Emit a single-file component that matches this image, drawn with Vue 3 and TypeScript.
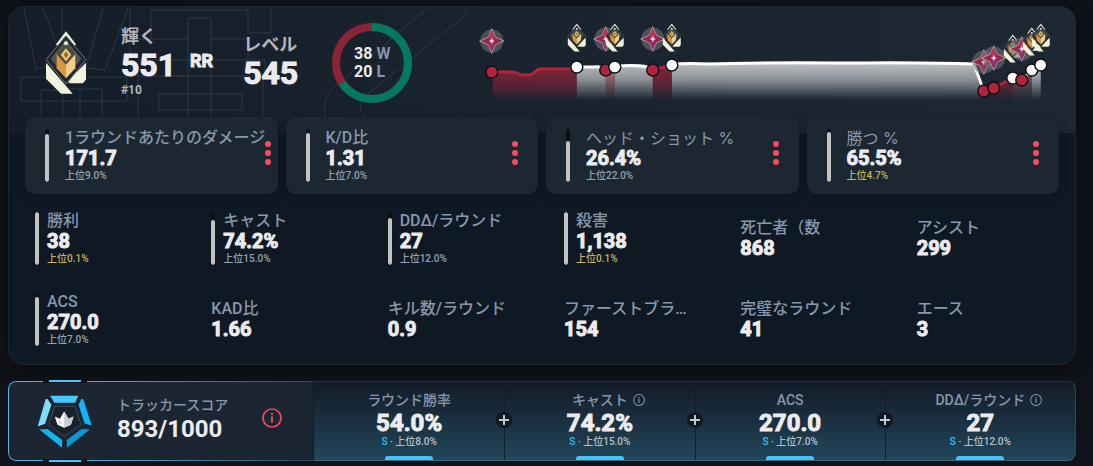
<script setup lang="ts">
interface Stat {
  label: string
  value: string
  top?: number
  topText?: string
  gold?: boolean
  wide?: boolean
}

interface Point {
  x: number
  y: number
  tier: 'radiant' | 'immortal'
  iconY: number
}

const cards: Stat[] = [
  { label: '1ラウンドあたりのダメージ', value: '171.7', top: 9, topText: '上位9.0%' },
  { label: 'K/D比', value: '1.31', top: 7, topText: '上位7.0%' },
  { label: 'ヘッド・ショット %', value: '26.4%', top: 22, topText: '上位22.0%', wide: true },
  { label: '勝つ %', value: '65.5%', top: 4.7, topText: '上位4.7%', gold: true, wide: true },
]

const stats: Stat[] = [
  { label: '勝利', value: '38', top: 0.1, topText: '上位0.1%', gold: true },
  { label: 'キャスト', value: '74.2%', top: 15, topText: '上位15.0%' },
  { label: 'DDΔ/ラウンド', value: '27', top: 12, topText: '上位12.0%' },
  { label: '殺害', value: '1,138', top: 0.1, topText: '上位0.1%', gold: true },
  { label: '死亡者（数', value: '868' },
  { label: 'アシスト', value: '299' },
  { label: 'ACS', value: '270.0', top: 7, topText: '上位7.0%' },
  { label: 'KAD比', value: '1.66' },
  { label: 'キル数/ラウンド', value: '0.9' },
  { label: 'ファーストブラ…', value: '154' },
  { label: '完璧なラウンド', value: '41' },
  { label: 'エース', value: '3' },
]

const scoreParts = [
  { label: 'ラウンド勝率', value: '54.0%', topText: '上位8.0%', info: false },
  { label: 'キャスト', value: '74.2%', topText: '上位15.0%', info: true },
  { label: 'ACS', value: '270.0', topText: '上位7.0%', info: false },
  { label: 'DDΔ/ラウンド', value: '27', topText: '上位12.0%', info: true },
]

const points: Point[] = [
  { x: 492, y: 72, tier: 'immortal', iconY: 41 },
  { x: 577, y: 67, tier: 'radiant', iconY: 37 },
  { x: 606, y: 70, tier: 'immortal', iconY: 39 },
  { x: 615, y: 67, tier: 'radiant', iconY: 37 },
  { x: 653, y: 70, tier: 'immortal', iconY: 39 },
  { x: 672, y: 65, tier: 'radiant', iconY: 37 },
  { x: 984, y: 91, tier: 'immortal', iconY: 62 },
  { x: 994, y: 88, tier: 'immortal', iconY: 58 },
  { x: 1013, y: 78, tier: 'radiant', iconY: 48 },
  { x: 1022, y: 80, tier: 'immortal', iconY: 49 },
  { x: 1032, y: 70, tier: 'radiant', iconY: 41 },
  { x: 1041, y: 65, tier: 'radiant', iconY: 37 },
]

const wins = 38
const losses = 20
const circumference = 2 * Math.PI * 36
const winArc = (circumference * wins) / (wins + losses)
</script>

<template>
  <main class="page">
    <svg class="defs" aria-hidden="true">
      <symbol id="radiant" viewBox="130 92 132 194">
        <path d="M196 95 226 134 221 140 196 109 171 140 166 134Z" fill="#e9efe2" />
        <path d="M136 190 216 283H181L136 238Z" fill="#f1f3df" />
        <path d="M256 190V240L247 251H207L200 245Z" fill="#f1f3df" />
        <path d="M196 109 256 180 196 254 136 180Z" fill="#20262b" stroke="#6d7575" stroke-width="3" />
        <path d="M196 120 242 178 196 236 150 178Z" fill="#50564f" />
        <path d="M168 162 196 192V236L168 206Z" fill="#d9963c" />
        <path d="M224 162 196 192V236L224 206Z" fill="#f2cf88" />
        <path d="M196 134 224 164 196 196 168 164Z" fill="#4b4a42" />
        <path d="M196 146 212 166 196 186 180 166Z" fill="#efc66c" />
        <path d="M196 156 203 166 196 176 189 166Z" fill="#8a6d3a" />
        <circle cx="196" cy="131" r="6" fill="#f4f6ee" />
      </symbol>
      <symbol id="immortal" viewBox="0 0 26 26">
        <circle cx="13" cy="13" r="11.5" fill="#6b7173" fill-opacity=".6" />
        <path d="M13 0 17 9 26 13 17 17 13 26 9 17 0 13 9 9Z" fill="#b9a9ad" />
        <path d="M13 2 16.500 9.500 24 13 16.500 16.500 13 24 9.500 16.500 2 13 9.500 9.500Z" fill="#98264a" />
        <path d="M13 2 16.500 9.500 13 13 9.500 9.500Z" fill="#b4365a" />
        <path d="M13 24 16.500 16.500 13 13 9.500 16.500Z" fill="#923468" />
        <path d="M13 10 14 12 16 13 14 14 13 16 12 14 10 13 12 12Z" fill="#efd9f0" />
      </symbol>
      <symbol id="info" viewBox="0 0 20 20">
        <circle cx="10" cy="10" r="9" fill="none" stroke="currentColor" stroke-width="1.700" />
        <path d="M10 8.500V15M10 5V7" fill="none" stroke="currentColor" stroke-width="1.800" />
      </symbol>
    </svg>

    <section class="panel">
      <header class="hero">
        <svg class="map" viewBox="8 6 520 127" aria-hidden="true">
          <path
            d="M23 7 35 68 55 65M42 7 58 50M61 7V42M102 7 85 67 104 69 127 7M129 7V70M20 76H126V100H20ZM40 133V89H62V133M79 88V133M62 88H101V133M137 133V70M126 75H187M137 38H187M150 38V9H247V32H270V7M187 133V17H210V133M210 38H247V59M137 59H264V75H160M158 93H241V109H158ZM262 75V133M427 7 332 87C321 97 322 110 328 133M461 7 467 12 362 97Q355 106 365 117"
          />
        </svg>
        <svg class="rank-icon" role="img" aria-label="輝く"><use href="#radiant" /></svg>
        <div class="rank">
          <div class="title">輝く</div>
          <div class="rating"><span class="big">551</span><span class="unit">RR</span></div>
          <div class="place">#10</div>
        </div>
        <div class="level">
          <div class="title">レベル</div>
          <div class="big">545</div>
        </div>
        <div class="ring">
          <svg viewBox="0 0 80 80" aria-hidden="true">
            <circle cx="40" cy="40" r="36" stroke="#8c2438" />
            <circle
              cx="40"
              cy="40"
              r="36"
              stroke="#037a5e"
              :stroke-dasharray="`${winArc} ${circumference}`"
              transform="rotate(-90 40 40)"
            />
          </svg>
          <div class="record">
            <span>{{ wins }} <i>W</i></span>
            <span>{{ losses }} <i>L</i></span>
          </div>
        </div>
        <svg class="chart" viewBox="480 7 595 110" preserveAspectRatio="xMaxYMid meet" role="img" aria-label="RR">
          <defs>
            <linearGradient id="white-fill" gradientUnits="userSpaceOnUse" x1="0" y1="62" x2="0" y2="100">
              <stop offset="0" stop-color="#fff" stop-opacity=".72" />
              <stop offset=".45" stop-color="#fff" stop-opacity=".5" />
              <stop offset="1" stop-color="#fff" stop-opacity="0" />
            </linearGradient>
            <linearGradient id="red-fill" gradientUnits="userSpaceOnUse" x1="0" y1="68" x2="0" y2="100">
              <stop offset="0" stop-color="#a02238" stop-opacity=".75" />
              <stop offset=".5" stop-color="#8a2237" stop-opacity=".6" />
              <stop offset="1" stop-color="#8a2237" stop-opacity="0" />
            </linearGradient>
            <linearGradient id="pink-fill" gradientUnits="userSpaceOnUse" x1="0" y1="68" x2="0" y2="100">
              <stop offset="0" stop-color="#e08a92" stop-opacity=".85" />
              <stop offset="1" stop-color="#e08a92" stop-opacity="0" />
            </linearGradient>
          </defs>
          <path d="M493 72H512L522 75H530L540 70 577 69V100H493Z" fill="url(#red-fill)" />
          <path d="M577 67 597 66 606 70V100H577ZM615 67 645 66 653 70V100H615ZM672 65 682 63 860 62 973 64 982 91V100H672Z" fill="url(#white-fill)" />
          <path d="M606 70 615 67V100H606Z" fill="url(#pink-fill)" />
          <path d="M653 70 672 65V100H653ZM994 88 1013 78V100H994Z" fill="url(#red-fill)" />
          <path d="M1013 78 1032 72V100H1013Z" fill="url(#pink-fill)" opacity=".6" />
          <path d="M1032 70 1041 65V100H1032Z" fill="url(#white-fill)" />
          <g class="line red">
            <path d="M492 72H512C518 72 518 75 524 75H529C535 75 535 69 541 69H577M606 70 615 67M653 70 672 65M984 91 994 88 1013 78 1022 80" />
          </g>
          <g class="line">
            <path d="M577 67H593Q602 66 606 70M615 66C634 65 648 65 653 70M672 64Q690 63 710 64C760 62 830 63 860 63 900 62 930 63 974 64L984 91M1022 80 1032 70 1041 65" />
          </g>
          <template v-for="p in points" :key="p.x">
            <use v-if="p.tier === 'radiant'" href="#radiant" :x="p.x - 10" :y="p.iconY - 14" width="20" height="29" />
            <use v-else href="#immortal" :x="p.x - 13" :y="p.iconY - 13" width="26" height="26" />
          </template>
          <circle
            v-for="p in points"
            :key="p.x"
            :cx="p.x"
            :cy="p.y"
            r="6"
            :fill="p.tier === 'radiant' ? '#fff' : '#b3243c'"
            stroke="#0d1016"
            stroke-width="1.500"
          />
        </svg>
      </header>

      <div class="cards">
        <article v-for="c in cards" :key="c.label" class="card">
          <div class="meter"><div :style="{ height: 100 - (c.top ?? 0) + '%' }"></div></div>
          <div class="text">
            <div class="label" :class="{ wide: c.wide }">{{ c.label }}</div>
            <div class="value">{{ c.value }}</div>
            <div class="top" :class="{ gold: c.gold }">{{ c.topText }}</div>
          </div>
          <button class="more" type="button" :aria-label="c.label">
            <i></i><i></i><i></i>
          </button>
        </article>
      </div>

      <div class="stats">
        <div v-for="s in stats" :key="s.label" class="stat">
          <div v-if="s.topText" class="meter"><div :style="{ height: 100 - (s.top ?? 0) + '%' }"></div></div>
          <div class="text">
            <div class="label">{{ s.label }}</div>
            <div class="value">{{ s.value }}</div>
            <div v-if="s.topText" class="top" :class="{ gold: s.gold }">{{ s.topText }}</div>
          </div>
        </div>
      </div>
    </section>

    <section class="score">
      <div class="total">
        <svg class="badge" viewBox="110 374 170 164" aria-hidden="true">
          <path d="M152 379H236L227 400H165Z" fill="#45c8ff" />
          <path d="M139 389H144L156 405 137 463 115 471Z" fill="#7ddcff" />
          <path d="M245 389H251L276 468 255 462 237 406Z" fill="#0fb4fb" />
          <path d="M120 480 144 478 188 511V534Z" fill="#0fb4fb" />
          <path d="M271 480 202 534V511L246 478Z" fill="#0898d8" />
          <path d="M165 411H226L244 465 194 500 148 465Z" fill="#18212c" stroke="#4e5863" stroke-width="2" />
          <path d="M166 441 181 448 194 426 207 448 222 441 214 466 194 475 174 466Z" fill="#fff" />
          <path d="M194 426 207 448 222 441 214 466 194 475Z" fill="#c9cdd2" />
          <path d="M181 448 188 462 174 466Z" fill="#dadde0" />
        </svg>
        <div class="total-text">
          <div class="small-label">トラッカースコア</div>
          <div class="score-value">893/1000</div>
        </div>
        <button class="info-button" type="button" aria-label="トラッカースコア">
          <svg><use href="#info" /></svg>
        </button>
      </div>
      <div class="parts">
        <div v-for="p in scoreParts" :key="p.label" class="part">
          <div class="small-label">
            {{ p.label }}<svg v-if="p.info" class="info" aria-hidden="true"><use href="#info" /></svg>
          </div>
          <div class="score-value">{{ p.value }}</div>
          <div class="grade"><b>S</b> · {{ p.topText }}</div>
          <span class="plus" aria-hidden="true"></span>
        </div>
      </div>
    </section>
  </main>
</template>

<style>
body {
  margin: 0;
  background: #0f1218;
}
</style>

<style scoped>
.page {
  box-sizing: border-box;
  padding: 6px 17px 6px 8px;
  font-family: Roboto, "Noto Sans CJK JP", sans-serif;
  color: #ececf0;
  background: #0f1218;
}
.page * {
  box-sizing: border-box;
}
.defs {
  position: absolute;
  width: 0;
  height: 0;
}
.panel {
  padding-bottom: 18px;
  border: 1px solid #1d2832;
  border-radius: 16px;
  background: #0f1923;
  box-shadow: 0 4px 16px #0b0d10;
  overflow: hidden;
}
.hero {
  position: relative;
  display: flex;
  align-items: center;
  height: 126px;
  padding: 0 0 16px 35px;
  background: linear-gradient(90deg, #151e28, #1a242f 50%, #1d2833);
}
.map {
  position: absolute;
  left: 0;
  top: 0;
  width: 520px;
  height: 127px;
}
.map path {
  fill: none;
  stroke: #2e3842;
  stroke-width: 1;
}
.rank-icon {
  position: relative;
  width: 44px;
  height: 65px;
}
.rank {
  position: relative;
  margin-left: 33px;
}
.title {
  font-size: 18px;
  line-height: 22px;
  font-weight: 700;
  color: #b2b4b9;
}
.rating {
  display: flex;
  gap: 14px;
}
.big {
  font-size: 32px;
  line-height: 34px;
  font-weight: 700;
}
.unit {
  font-size: 18px;
  line-height: 26px;
  font-weight: 700;
}
.big,
.unit,
.value,
.part .score-value {
  -webkit-text-stroke: 1px currentColor;
}
.place {
  font-size: 12px;
  line-height: 16px;
  font-weight: 700;
  color: #b2b4b9;
}
.level {
  position: relative;
  margin-left: 30px;
}
.ring {
  position: relative;
  display: grid;
  place-items: center;
  width: 80px;
  height: 80px;
  margin: 2px 0 0 34px;
}
.ring > * {
  grid-area: 1 / 1;
}
.ring circle {
  fill: none;
  stroke-width: 8;
}
.record {
  display: grid;
  font-size: 16px;
  line-height: 18px;
  font-weight: 700;
}
.record i {
  font-style: normal;
  color: #8393a8;
}
.chart {
  position: relative;
  flex: 1;
  min-width: 0;
  height: 110px;
}
.line path {
  fill: none;
  stroke: #fff;
  stroke-width: 3;
}
.line.red path {
  stroke: #b3243c;
}
.cards {
  position: relative;
  display: grid;
  grid-template-columns: repeat(4, minmax(0, 1fr));
  gap: 8px;
  margin: -16px 16px 0;
}
.card {
  display: flex;
  padding: 12px 20px;
  border-radius: 10px;
  background: #1c2732;
  box-shadow: 0 2px 8px #0c131b80;
}
.meter {
  display: flex;
  flex: none;
  flex-direction: column;
  justify-content: flex-end;
  width: 4px;
  border-radius: 2px;
  background: #0c0f14;
  overflow: hidden;
}
.meter div {
  border-radius: 2px;
  background: #c6c2bf;
}
.text {
  white-space: nowrap;
}
.card .text {
  flex: 1;
  margin-left: 16px;
}
.label {
  font-size: 16px;
  line-height: 18px;
  font-weight: 500;
  color: #8797ac;
}
.label.wide {
  font-family: Inter, "Noto Sans CJK JP", sans-serif;
  font-weight: 400;
}
.value {
  font-size: 20px;
  line-height: 22px;
  font-weight: 700;
}
.top {
  font-size: 10px;
  line-height: 13px;
  font-weight: 500;
  color: #94a3b5;
}
.top.gold {
  color: #c5b25a;
}
.more {
  display: flex;
  flex-direction: column;
  justify-content: center;
  gap: 3px;
  height: 48px;
  padding: 0;
  border: 0;
  background: none;
  cursor: pointer;
}
.more i {
  width: 6px;
  height: 6px;
  border-radius: 50%;
  background: #fb4a5b;
}
.stats {
  display: grid;
  grid-template-columns: repeat(6, minmax(0, 1fr));
  grid-auto-rows: 53px;
  gap: 28px 24px;
  margin: 18px 16px 0;
}
.stat {
  display: flex;
  align-items: center;
  gap: 8px;
  padding: 0 10px;
}
.stat .meter {
  align-self: stretch;
}
.score {
  display: flex;
  height: 80px;
  margin-top: 16px;
}
.total {
  position: relative;
  display: flex;
  align-items: center;
  flex: 0 0 305px;
  padding-left: 28px;
  border-radius: 8px 0 0 8px;
  background: #1c2632;
}
.total::before {
  content: "";
  position: absolute;
  inset: 0;
  border: solid #55b8e6;
  border-width: 1px 0 1px 1px;
  border-radius: 8px 0 0 8px;
  mask-image: linear-gradient(90deg, #000, #000c 40%, #0004);
}
.total::after {
  content: "";
  position: absolute;
  left: 35px;
  top: -1px;
  bottom: -1px;
  width: 44px;
  background:
    linear-gradient(#4cc6fb, #4cc6fb) center top / 32px 2px no-repeat,
    linear-gradient(#4cc6fb, #4cc6fb) center bottom / 32px 2px no-repeat,
    linear-gradient(#0f1218, #0f1218) center top / 44px 3px no-repeat,
    linear-gradient(#0f1218, #0f1218) center bottom / 44px 3px no-repeat;
}
.badge {
  width: 57px;
  height: 55px;
}
.total-text {
  margin-left: 24px;
  padding-bottom: 4px;
}
.total-text .score-value {
  line-height: 28px;
}
.small-label {
  display: flex;
  align-items: center;
  gap: 5px;
  font-size: 14px;
  line-height: 20px;
  font-weight: 500;
  color: #8797ac;
}
.score-value {
  font-size: 24px;
  line-height: 26px;
  font-weight: 700;
}
.info-button {
  width: 20px;
  height: 20px;
  margin: 0 31px 6px auto;
  padding: 0;
  border: 0;
  background: none;
  color: #f04b5f;
  cursor: pointer;
}
.info-button svg {
  display: block;
  width: 20px;
  height: 20px;
}
.info {
  width: 12px;
  height: 12px;
  margin-right: -17px;
}
.parts {
  display: grid;
  grid-template-columns: repeat(4, minmax(0, 1fr));
  flex: 1;
  border: 1px solid #2b4654;
  border-color: #22303c #2b4654 #3d6676 #111a24;
  border-radius: 0 8px 8px 0;
  background: linear-gradient(#131c28, #1a3040 50%, #21475a);
}
.part {
  position: relative;
  display: flex;
  flex-direction: column;
  align-items: center;
  padding-top: 8px;
}
.part + .part {
  border-left: 1px solid #111e29;
}
.part::after {
  content: "";
  width: 48px;
  height: 4px;
  margin-top: auto;
  border-radius: 3px 3px 0 0;
  background: #45c4fb;
}
.grade {
  font-size: 10px;
  line-height: 12px;
  font-weight: 500;
  color: #b6c0c9;
}
.grade b {
  font-weight: 500;
  color: #35bdf5;
}
.plus {
  position: absolute;
  z-index: 1;
  right: -8px;
  top: 30px;
  width: 16px;
  height: 16px;
  border-radius: 50%;
  background:
    linear-gradient(#c3c8ce, #c3c8ce) center / 10px 2px no-repeat,
    linear-gradient(#c3c8ce, #c3c8ce) center / 2px 10px no-repeat,
    #0f1720;
}
.part:last-child .plus {
  display: none;
}
</style>
